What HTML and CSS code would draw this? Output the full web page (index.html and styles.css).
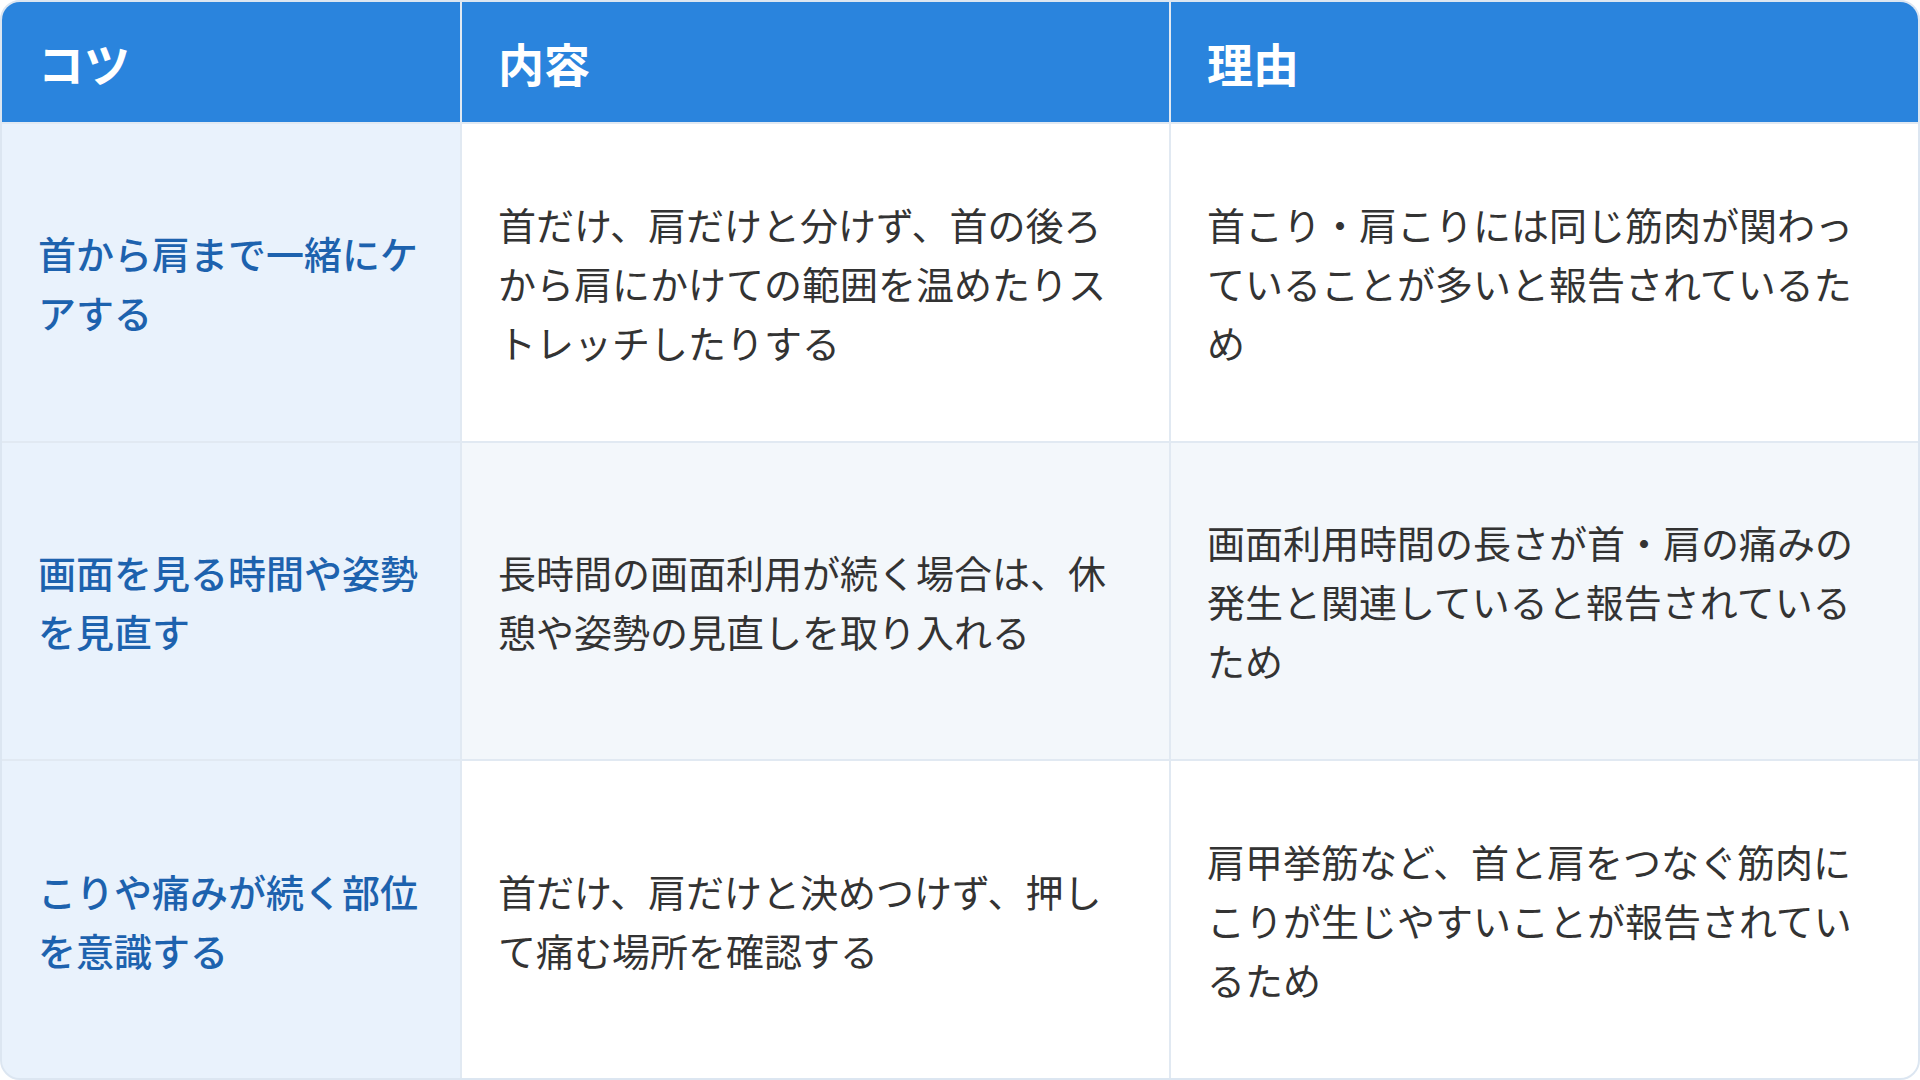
FILE: index.html
```html
<!DOCTYPE html>
<html lang="ja">
<head>
<meta charset="utf-8">
<title>コツ</title>
<link rel="stylesheet" href="styles.css">
</head>
<body>
<div class="table">
  <div class="cell head">コツ</div>
  <div class="cell head">内容</div>
  <div class="cell head">理由</div>

  <div class="cell key">首から肩まで一緒にケアする</div>
  <div class="cell">首だけ、肩だけと分けず、首の後ろから肩にかけての範囲を温めたりストレッチしたりする</div>
  <div class="cell">首こり・肩こりには同じ筋肉が関わっていることが多いと報告されているため</div>

  <div class="cell key">画面を見る時間や姿勢を見直す</div>
  <div class="cell alt">長時間の画面利用が続く場合は、休憩や姿勢の見直しを取り入れる</div>
  <div class="cell alt">画面利用時間の長さが首・肩の痛みの発生と関連していると報告されているため</div>

  <div class="cell key">こりや痛みが続く部位を意識する</div>
  <div class="cell">首だけ、肩だけと決めつけず、押して痛む場所を確認する</div>
  <div class="cell">肩甲挙筋など、首と肩をつなぐ筋肉にこりが生じやすいことが報告されているため</div>
</div>
</body>
</html>
```

FILE: styles.css
```css
html, body {
  margin: 0;
  padding: 0;
  background: #ffffff;
}

body {
  font-family: "Noto Sans CJK JP", "Noto Sans", sans-serif;
}

.table {
  box-sizing: border-box;
  width: 1920px;
  height: 1080px;
  border: 2px solid #dce6f1;
  border-radius: 20px;
  overflow: hidden;
  display: grid;
  grid-template-columns: 458px 707px 1fr;
  grid-template-rows: 120px 1fr 1fr 1fr;
  gap: 2px;
  background: #e1e9f2;
}

.cell {
  display: flex;
  align-items: center;
  padding: 0 36px 0 36px;
  background: #ffffff;
  color: #333333;
  font-size: 38px;
  line-height: 59px;
}

.cell.alt {
  background: #f3f7fb;
}

.cell.head {
  background: #2a84dd;
  color: #ffffff;
  font-size: 46px;
  font-weight: 700;
  line-height: 60px;
}

.cell.key {
  background: #e9f2fc;
  color: #1d62ae;
  font-weight: 500;
}
```
